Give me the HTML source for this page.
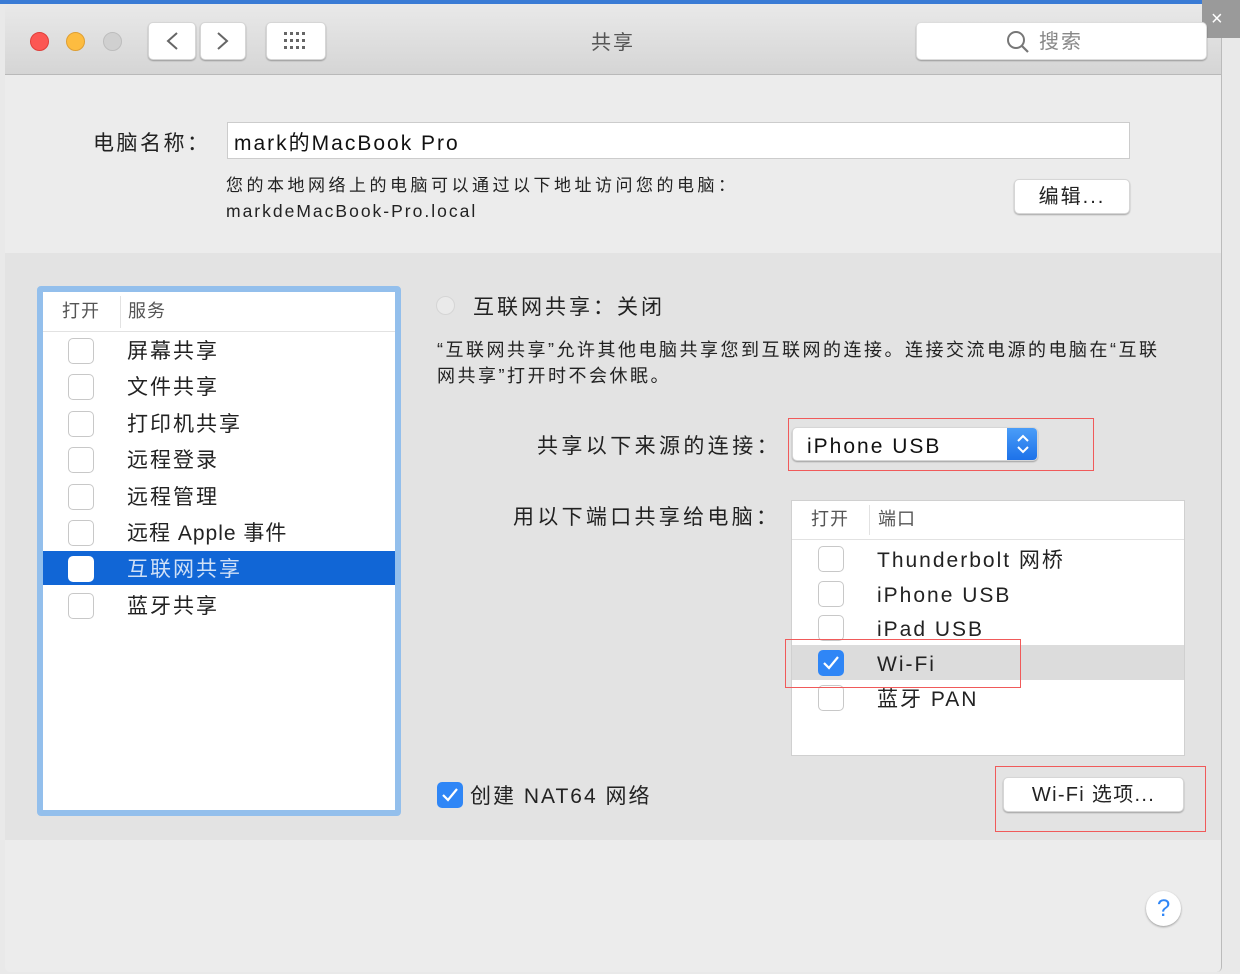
<!DOCTYPE html><html><head><meta charset="utf-8"><style>
*{margin:0;padding:0;box-sizing:border-box}
body{width:1240px;height:974px;background:#e9e9e9;position:relative;overflow:hidden;font-family:"Liberation Sans","Noto Sans CJK SC",sans-serif;color:#222}
.a{position:absolute}
.t{position:absolute;white-space:nowrap;line-height:1}
.cb{position:absolute;width:26px;height:26px;border:1px solid #c8c8c8;border-radius:5px;background:#fff}
.btn{position:absolute;background:#fff;border-radius:5px;box-shadow:0 1px 1.5px rgba(0,0,0,.3);border:1px solid #d6d6d6;text-align:center}
.red{position:absolute;border:1.5px solid #f05a5a}
.ls{letter-spacing:2px}
.lc{letter-spacing:3px}
</style></head><body>
<div class="a" style="left:0;top:0;width:1240px;height:4px;background:#3a7bd5"></div>
<div class="a" style="left:5px;top:4px;width:1217px;height:968px;background:#ececec;border-radius:5px;overflow:hidden;border-right:1px solid #bbb">
 <div class="a" style="left:0;top:0;width:1217px;height:71px;background:linear-gradient(#e9e9e9,#d5d5d5);border-bottom:1px solid #b9b9b9"></div>
 <div class="a" style="left:0;top:249px;width:1217px;height:587px;background:#e3e3e3"></div>
</div>
<div class="a" style="left:1202px;top:0;width:38px;height:38px;background:#9a9a9a"></div>
<div class="t" style="left:1211px;top:9px;font-size:20px;color:#fff">×</div>
<div class="a" style="left:30px;top:32px;width:19px;height:19px;border-radius:50%;background:#fc5753;border:1px solid #df3e3a"></div>
<div class="a" style="left:66px;top:32px;width:19px;height:19px;border-radius:50%;background:#fdbc40;border:1px solid #de9f34"></div>
<div class="a" style="left:103px;top:32px;width:19px;height:19px;border-radius:50%;background:#d0d0d0;border:1px solid #bdbdbd"></div>
<div class="btn" style="left:148px;top:22px;width:48px;height:38px"></div>
<div class="btn" style="left:200px;top:22px;width:46px;height:38px"></div>
<svg class="a" style="left:148px;top:22px" width="100" height="38"><path d="M29 11 L20 19 L29 27" stroke="#666" stroke-width="2" fill="none"/><path d="M70 11 L79 19 L70 27" stroke="#666" stroke-width="2" fill="none"/></svg>
<div class="btn" style="left:266px;top:22px;width:60px;height:38px"></div>
<svg class="a" style="left:283px;top:32px" width="26" height="18"><g fill="#666"><rect x="1" y="0" width="3" height="3"/><rect x="7" y="0" width="3" height="3"/><rect x="13" y="0" width="3" height="3"/><rect x="19" y="0" width="3" height="3"/><rect x="1" y="7" width="3" height="3"/><rect x="7" y="7" width="3" height="3"/><rect x="13" y="7" width="3" height="3"/><rect x="19" y="7" width="3" height="3"/><rect x="1" y="14" width="3" height="3"/><rect x="7" y="14" width="3" height="3"/><rect x="13" y="14" width="3" height="3"/><rect x="19" y="14" width="3" height="3"/></g></svg>
<div class="t" style="left:591px;top:33px;font-size:20px;color:#555;letter-spacing:2px">共享</div>
<div class="btn" style="left:916px;top:22px;width:291px;height:38px;border-color:#ddd"></div>
<svg class="a" style="left:1005px;top:29px" width="26" height="26"><circle cx="11" cy="11" r="8" stroke="#777" stroke-width="2" fill="none"/><path d="M17 17 L23 23" stroke="#777" stroke-width="2.2"/></svg>
<div class="t" style="left:1039px;top:32px;font-size:20px;color:#888;letter-spacing:2px">搜索</div>

<div class="t" style="left:93px;top:133px;font-size:21px;letter-spacing:2.5px">电脑名称：</div>
<div class="a" style="left:227px;top:122px;width:903px;height:37px;background:#fff;border:1px solid #ccc"></div>
<div class="t ls" style="left:234px;top:133px;font-size:21px;color:#111">mark的MacBook Pro</div>
<div class="t" style="left:226px;top:177px;font-size:17px;letter-spacing:3.5px">您的本地网络上的电脑可以通过以下地址访问您的电脑：</div>
<div class="t" style="left:226px;top:203px;font-size:17.5px;letter-spacing:2px">markdeMacBook-Pro.local</div>
<div class="btn" style="left:1014px;top:179px;width:116px;height:35px;font-size:20px;line-height:35px;letter-spacing:2px">编辑...</div>

<div class="a" style="left:37px;top:286px;width:364px;height:530px;border:6px solid #93bfec;border-radius:4px;background:#fff"></div>
<div class="a" style="left:43px;top:331px;width:352px;height:1px;background:#e2e2e2"></div>
<div class="a" style="left:120px;top:296px;width:1px;height:32px;background:#e2e2e2"></div>
<div class="t" style="left:62px;top:302px;font-size:18px;color:#555;letter-spacing:1px">打开</div>
<div class="t" style="left:128px;top:302px;font-size:18px;color:#555;letter-spacing:1px">服务</div>
<div class="a" style="left:43px;top:551px;width:352px;height:34px;background:#1166d6"></div>
<div class="cb" style="left:68px;top:338px"></div><div class="t ls" style="left:127px;top:341px;font-size:21px">屏幕共享</div>
<div class="cb" style="left:68px;top:374px"></div><div class="t ls" style="left:127px;top:377px;font-size:21px">文件共享</div>
<div class="cb" style="left:68px;top:411px"></div><div class="t ls" style="left:127px;top:414px;font-size:21px">打印机共享</div>
<div class="cb" style="left:68px;top:447px"></div><div class="t ls" style="left:127px;top:450px;font-size:21px">远程登录</div>
<div class="cb" style="left:68px;top:484px"></div><div class="t ls" style="left:127px;top:487px;font-size:21px">远程管理</div>
<div class="cb" style="left:68px;top:520px"></div><div class="t" style="left:127px;top:523px;font-size:21px;letter-spacing:1px">远程 Apple 事件</div>
<div class="cb" style="left:68px;top:556px;border-color:#fff"></div><div class="t ls" style="left:127px;top:559px;font-size:21px;color:#cfe0f7">互联网共享</div>
<div class="cb" style="left:68px;top:593px"></div><div class="t ls" style="left:127px;top:596px;font-size:21px">蓝牙共享</div>

<div class="a" style="left:436px;top:296px;width:19px;height:19px;border-radius:50%;border:1px solid #d5d5d5;background:#eaeaea"></div>
<div class="t lc" style="left:473px;top:297px;font-size:21px">互联网共享：关闭</div>
<div class="t" style="left:437px;top:341px;font-size:18px;letter-spacing:2.5px">“互联网共享”允许其他电脑共享您到互联网的连接。连接交流电源的电脑在“互联</div>
<div class="t" style="left:437px;top:367px;font-size:18px;letter-spacing:2.5px">网共享”打开时不会休眠。</div>
<div class="t" style="left:537px;top:436px;font-size:21px;letter-spacing:3.4px">共享以下来源的连接：</div>
<div class="btn" style="left:792px;top:427px;width:246px;height:34px;overflow:hidden;text-align:left"><div class="a" style="right:0;top:0;width:30px;height:34px;background:linear-gradient(#4a9df8,#1a6fe8)"></div></div>
<svg class="a" style="left:1014px;top:432px" width="18" height="24"><path d="M4 9 L9 4 L14 9 M4 15 L9 20 L14 15" stroke="#fff" stroke-width="2" fill="none"/></svg>
<div class="t ls" style="left:807px;top:436px;font-size:21px;color:#111">iPhone USB</div>
<div class="red" style="left:788px;top:418px;width:306px;height:53px"></div>
<div class="t" style="left:513px;top:507px;font-size:21px;letter-spacing:3.3px">用以下端口共享给电脑：</div>
<div class="a" style="left:791px;top:500px;width:394px;height:256px;background:#fff;border:1px solid #d0d0d0"></div>
<div class="a" style="left:792px;top:539px;width:392px;height:1px;background:#e2e2e2"></div>
<div class="a" style="left:869px;top:505px;width:1px;height:30px;background:#e2e2e2"></div>
<div class="t" style="left:811px;top:510px;font-size:18px;color:#555;letter-spacing:1px">打开</div>
<div class="t" style="left:878px;top:510px;font-size:18px;color:#555;letter-spacing:1px">端口</div>
<div class="a" style="left:792px;top:645px;width:392px;height:35px;background:#dcdcdc"></div>
<div class="cb" style="left:818px;top:546px"></div><div class="t ls" style="left:877px;top:550px;font-size:21px">Thunderbolt 网桥</div>
<div class="cb" style="left:818px;top:581px"></div><div class="t ls" style="left:877px;top:585px;font-size:21px">iPhone USB</div>
<div class="cb" style="left:818px;top:615px"></div><div class="t ls" style="left:877px;top:619px;font-size:21px">iPad USB</div>
<div class="cb" style="left:818px;top:650px;background:#2f86f6;border-color:#2f86f6"></div><div class="t ls" style="left:877px;top:654px;font-size:21px">Wi-Fi</div>
<svg class="a" style="left:818px;top:650px" width="26" height="26"><path d="M6 13 L11 18 L20 7" stroke="#fff" stroke-width="2.2" fill="none"/></svg>
<div class="cb" style="left:818px;top:685px"></div><div class="t ls" style="left:877px;top:689px;font-size:21px">蓝牙 PAN</div>
<div class="red" style="left:785px;top:639px;width:236px;height:49px"></div>
<div class="cb" style="left:437px;top:782px;background:#2f86f6;border-color:#2f86f6"></div>
<svg class="a" style="left:437px;top:782px" width="26" height="26"><path d="M6 13 L11 18 L20 7" stroke="#fff" stroke-width="2.2" fill="none"/></svg>
<div class="t ls" style="left:470px;top:786px;font-size:21px">创建 NAT64 网络</div>
<div class="btn" style="left:1003px;top:777px;width:181px;height:35px;font-size:20px;line-height:35px;letter-spacing:1.3px">Wi-Fi 选项...</div>
<div class="red" style="left:995px;top:766px;width:211px;height:66px"></div>
<div class="a" style="left:1146px;top:891px;width:35px;height:35px;border-radius:50%;background:#fff;box-shadow:0 1px 2px rgba(0,0,0,.35);color:#2f86f6;font-size:24px;text-align:center;line-height:35px">?</div>
</body></html>
